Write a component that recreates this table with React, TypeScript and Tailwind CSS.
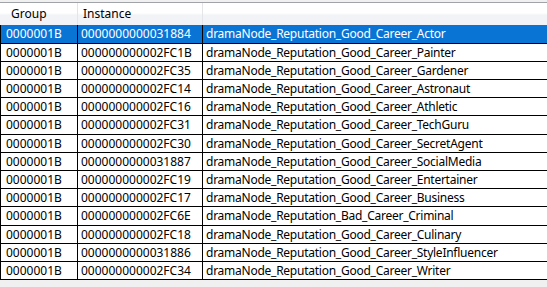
import React from "react";

type Row = { group: string; instance: string; name: string; h: string };

const rows: Row[] = [
  { group: "0000001B", instance: "0000000000031884", name: "dramaNode_Reputation_Good_Career_Actor", h: "h-[19px]" },
  { group: "0000001B", instance: "000000000002FC1B", name: "dramaNode_Reputation_Good_Career_Painter", h: "h-[18px]" },
  { group: "0000001B", instance: "000000000002FC35", name: "dramaNode_Reputation_Good_Career_Gardener", h: "h-[18px]" },
  { group: "0000001B", instance: "000000000002FC14", name: "dramaNode_Reputation_Good_Career_Astronaut", h: "h-[18px]" },
  { group: "0000001B", instance: "000000000002FC16", name: "dramaNode_Reputation_Good_Career_Athletic", h: "h-[18px]" },
  { group: "0000001B", instance: "000000000002FC31", name: "dramaNode_Reputation_Good_Career_TechGuru", h: "h-[19px]" },
  { group: "0000001B", instance: "000000000002FC30", name: "dramaNode_Reputation_Good_Career_SecretAgent", h: "h-[18px]" },
  { group: "0000001B", instance: "0000000000031887", name: "dramaNode_Reputation_Good_Career_SocialMedia", h: "h-[18px]" },
  { group: "0000001B", instance: "000000000002FC19", name: "dramaNode_Reputation_Good_Career_Entertainer", h: "h-[18px]" },
  { group: "0000001B", instance: "000000000002FC17", name: "dramaNode_Reputation_Good_Career_Business", h: "h-[18px]" },
  { group: "0000001B", instance: "000000000002FC6E", name: "dramaNode_Reputation_Bad_Career_Criminal", h: "h-[19px]" },
  { group: "0000001B", instance: "000000000002FC18", name: "dramaNode_Reputation_Good_Career_Culinary", h: "h-[18px]" },
  { group: "0000001B", instance: "0000000000031886", name: "dramaNode_Reputation_Good_Career_StyleInfluencer", h: "h-[18px]" },
  { group: "0000001B", instance: "000000000002FC34", name: "dramaNode_Reputation_Good_Career_Writer", h: "h-[18px]" },
];

export default function App() {
  return (
    <div
      className="w-[547px] h-[287px] bg-[#f0f0f0] overflow-hidden flex flex-col text-[12px] text-black"
      style={{ fontFamily: '"Noto Sans", "Noto Sans CJK SC", sans-serif' }}
    >
      {/* column header */}
      <div className="h-[23px] flex border-t border-[#a0a4a8] mt-[2px] bg-[linear-gradient(#ffffff_0%,#ffffff_45%,#f1f3f6_55%,#f1f3f6_100%)] shrink-0">
        <div className="w-[78px] border-r border-[#e3e5e8] pl-[11px] flex items-center">Group</div>
        <div className="w-[125px] border-r border-[#e3e5e8] pl-[5px] flex items-center">Instance</div>
        <div className="flex-1" />
      </div>

      {/* rows */}
      <div className="flex flex-col bg-white">
        {rows.map((r, i) => {
          const sel = i === 0;
          return (
            <div
              key={r.instance}
              className={`${r.h} flex border-b border-black ${sel ? "bg-[#0a74d5] text-white" : "bg-white"}`}
            >
              <div className="w-[78px] border-l border-[#6b6b6b] border-r border-black pl-[5px] flex items-center leading-none whitespace-nowrap">
                {r.group}
              </div>
              <div className="w-[125px] border-r border-black pl-[3px] flex items-center leading-none whitespace-nowrap">
                {r.instance}
              </div>
              <div className="flex-1 pl-[3px] flex items-center leading-none whitespace-nowrap tracking-[-0.25px]">
                {r.name}
              </div>
            </div>
          );
        })}
      </div>
    </div>
  );
}
